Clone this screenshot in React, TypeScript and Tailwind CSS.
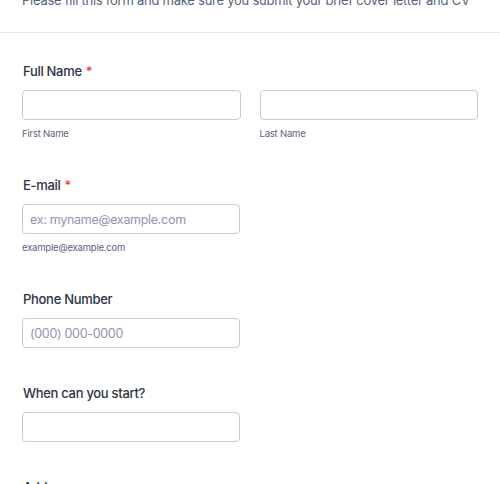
import React from "react";

const inputCls =
  "block w-full h-[30px] rounded-[4px] border border-[#c5cad9] bg-white px-[7px] text-[12.5px] tracking-[-0.3px] text-[#2c3345] placeholder:text-[#8f96a9] outline-none";

function Label({ text, required }: { text: string; required?: boolean }) {
  return (
    <div className="h-[18px] text-[13px] leading-[18px] font-medium tracking-[-0.3px] text-[#2c3345]">
      {text}
      {required && <span className="text-[#f23a3c] ml-[4px]">*</span>}
    </div>
  );
}

function Sub({ text }: { text: string }) {
  return (
    <div className="mt-[8px] h-[12px] text-[9.5px] leading-[12px] tracking-[-0.2px] text-[#57647e]">
      {text}
    </div>
  );
}

export default function App() {
  return (
    <div
      className="w-[500px] h-[484px] overflow-hidden bg-white"
      style={{ fontFamily: "Inter, 'Noto Sans', sans-serif" }}
    >
      <div className="-mt-[10px] px-[22px] h-[20px] text-[13px] leading-[20px] tracking-[-0.25px] text-[#57647e] whitespace-nowrap">
        Please fill this form and make sure you submit your brief cover letter and CV
      </div>
      <div className="mt-[22px] h-px bg-[#e3e5f0]" />
      <div className="pl-[23px] pr-[22px] pt-[29px] flex flex-col gap-[36px]">
        <div>
          <Label text="Full Name" required />
          <div className="mt-[10px] -ml-px grid grid-cols-2 gap-[19px]">
            <div>
              <input className={inputCls} />
              <Sub text="First Name" />
            </div>
            <div>
              <input className={inputCls} />
              <Sub text="Last Name" />
            </div>
          </div>
        </div>
        <div>
          <Label text="E-mail" required />
          <div className="mt-[10px] -ml-px w-[218px]">
            <input className={inputCls} placeholder="ex: myname@example.com" />
            <Sub text="example@example.com" />
          </div>
        </div>
        <div>
          <Label text="Phone Number" />
          <div className="mt-[10px] -ml-px w-[218px]">
            <input className={inputCls} placeholder="(000) 000-0000" />
          </div>
        </div>
        <div>
          <Label text="When can you start?" />
          <div className="mt-[10px] -ml-px w-[218px]">
            <input className={inputCls} />
          </div>
        </div>
        <div>
          <Label text="Address" />
        </div>
      </div>
    </div>
  );
}
